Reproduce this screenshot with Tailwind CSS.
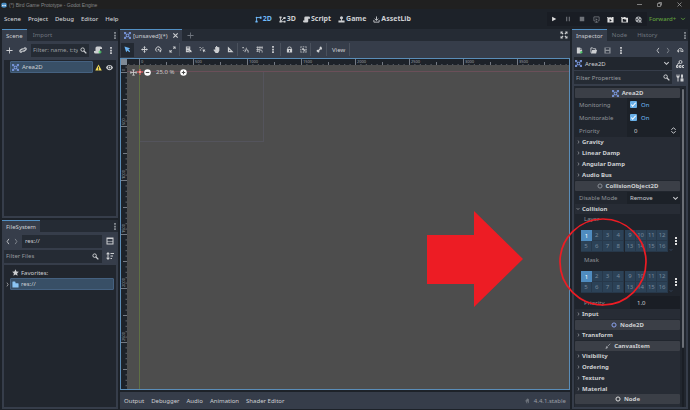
<!DOCTYPE html>
<html lang="en">
<head>
	<meta charset="UTF-8">
	<meta name="viewport" content="width=device-width, initial-scale=1.0">
	<title>(*) Bird Game Prototype - Godot Engine</title>
	<script src="https://cdn.jsdelivr.net/npm/@tailwindcss/browser@4"></script>
</head>
<body class="relative flex flex-col h-screen overflow-hidden bg-[#1d2229] text-[#cdcfd2] text-[6px] leading-[8px] font-['Noto_Sans',sans-serif]">

<!-- Icon sprite -->
<svg class="hidden" xmlns="http://www.w3.org/2000/svg">
	<symbol id="i-area" viewBox="0 0 16 16"><g fill="none" stroke="#7f9ee8" stroke-width="2"><rect x="5" y="5" width="6" height="6"/><path d="M1 5V1h4M11 1h4v4M15 11v4h-4M5 15H1v-4M1 1l4 4M15 1l-4 4M15 15l-4-4M1 15l4-4"/></g></symbol>
	<symbol id="i-dots" viewBox="0 0 4 16"><path fill="currentColor" d="M0 0h4v4H0zM0 6h4v4H0zM0 12h4v4H0z"/></symbol>
	<symbol id="i-plus" viewBox="0 0 16 16"><path fill="currentColor" d="M7 1h2v6h6v2H9v6H7V9H1V7h6z"/></symbol>
	<symbol id="i-link" viewBox="0 0 16 16"><g fill="none" stroke="currentColor" stroke-width="2.4"><path d="M7 9.5 5 12a2.2 2.2 0 0 1-3-3l3-2.500a2.200 2.200 0 0 1 3 0M9 6.500 11 4a2.200 2.200 0 0 1 3 3l-3 2.500a2.200 2.200 0 0 1-3 0"/></g></symbol>
	<symbol id="i-search" viewBox="0 0 16 16"><circle cx="6" cy="6" r="4" fill="none" stroke="currentColor" stroke-width="2.200"/><path d="m9 9 5.500 5.500" stroke="currentColor" stroke-width="3"/></symbol>
	<symbol id="i-script" viewBox="0 0 16 16"><path fill="currentColor" d="M6 1a3 3 0 0 0-3 3v6H0v2a3 3 0 0 0 3 3h6a3 3 0 0 0 3-3V6h4V4a3 3 0 0 0-3-3z"/></symbol>
	<symbol id="i-warn" viewBox="0 0 16 16"><path fill="#f5dc55" d="M8 1 0.500 15h15z"/><path fill="#21262e" d="M7 6h2v5H7zM7 12h2v2H7z"/></symbol>
	<symbol id="i-eye" viewBox="0 0 16 16"><path fill="currentColor" fill-rule="evenodd" d="M8 2C4 2 1 5 0 8c1 3 4 6 8 6s7-3 8-6c-1-3-4-6-8-6zm0 2a4 4 0 1 1 0 8 4 4 0 0 1 0-8z"/><circle cx="8" cy="8" r="2.200" fill="currentColor"/></symbol>
	<symbol id="i-left" viewBox="0 0 8 16"><path d="M6 2 2 8l4 6" fill="none" stroke="currentColor" stroke-width="2"/></symbol>
	<symbol id="i-right" viewBox="0 0 8 16"><path d="m2 2 4 6-4 6" fill="none" stroke="currentColor" stroke-width="2"/></symbol>
	<symbol id="i-down" viewBox="0 0 16 16"><path d="m3 5 5 5 5-5" fill="none" stroke="currentColor" stroke-width="2.400"/></symbol>
	<symbol id="i-split" viewBox="0 0 16 16"><path fill="currentColor" fill-rule="evenodd" d="M1 1h14v14H1zM3 4v4h10V4zM3 9v4h10V9z"/></symbol>
	<symbol id="i-sort" viewBox="0 0 16 16"><path fill="currentColor" d="M4 0 0 4.500h3v7H0L4 16l4-4.500H5v-7h3zM9 2h7v2H9zM9 7h5v2H9zM9 12h3v2H9z"/></symbol>
	<symbol id="i-star" viewBox="0 0 16 16"><path fill="currentColor" d="m8 0.500 2.300 5 5.400.6-4 3.700 1.100 5.400L8 12.500l-4.800 2.700 1.100-5.400-4-3.700 5.400-.6z"/></symbol>
	<symbol id="i-folder" viewBox="0 0 16 16"><path fill="#8bc4f3" d="M1 2a1 1 0 0 1 1-1h4a2 2 0 0 1 2 2v2h6a1 1 0 0 1 1 1v8a1 1 0 0 1-1 1H2a1 1 0 0 1-1-1z"/></symbol>
	<symbol id="i-2d" viewBox="0 0 16 16"><path fill="none" stroke="currentColor" stroke-width="2" d="M3.500 12V3.500H13"/><circle cx="3.500" cy="3.500" r="2" fill="currentColor"/><path fill="currentColor" d="M1 11h5v4H1zM11 1h4v5h-4z"/></symbol>
	<symbol id="i-3d" viewBox="0 0 16 16"><path fill="none" stroke="currentColor" stroke-width="2" d="M3.500 3v10H13M3.500 13 12 4"/><path fill="currentColor" d="M1 1h5v4H1zM10 2h5v5h-5zM11 11h4v4h-4zM1 11h5v4H1z"/></symbol>
	<symbol id="i-game" viewBox="0 0 16 16"><circle cx="8" cy="4" r="3.500" fill="currentColor"/><path fill="currentColor" d="M7 6h2v4h6v5H1v-5h6z"/></symbol>
	<symbol id="i-asset" viewBox="0 0 16 16"><path fill="none" stroke="currentColor" stroke-width="2" d="M8 1v9M4 6l4 4 4-4M2 9v5h12V9"/></symbol>
	<symbol id="i-play" viewBox="0 0 16 16"><path fill="currentColor" d="M3 2v12l11-6z"/></symbol>
	<symbol id="i-pause" viewBox="0 0 16 16"><path fill="currentColor" d="M3 2h3v12H3zM10 2h3v12h-3z"/></symbol>
	<symbol id="i-stop" viewBox="0 0 16 16"><path fill="currentColor" d="M2 2h12v12H2z"/></symbol>
	<symbol id="i-remote" viewBox="0 0 16 16"><path fill="none" stroke="currentColor" stroke-width="2" d="M5 11H2V2h12v9h-3M8 11v4M4 14h8"/><path fill="currentColor" d="M6 5v6l5-3z"/></symbol>
	<symbol id="i-clap" viewBox="0 0 16 16"><path fill="currentColor" fill-rule="evenodd" d="M0 2h3l1 2h2L5 2h3l1 2h2l-1-2h5v13H1V5zM6 7v6l5-3z"/></symbol>
	<symbol id="i-clapf" viewBox="0 0 16 16"><path fill="currentColor" fill-rule="evenodd" d="M0 2h3l1 2h2L5 2h5l1 2h5v11H1V5zM4 7v6h8V8H8L7 7z"/></symbol>
	<symbol id="i-movie" viewBox="0 0 16 16"><path fill="currentColor" fill-rule="evenodd" d="M8 1a7 7 0 1 0 0 14h8v-2h-3A7 7 0 0 0 8 1zm0 2a1.500 1.500 0 1 1 0 3 1.500 1.500 0 0 1 0-3zM4.500 6.500a1.500 1.500 0 1 1 0 3 1.500 1.500 0 0 1 0-3zm7 0a1.500 1.500 0 1 1 0 3 1.500 1.500 0 0 1 0-3zM8 10a1.500 1.500 0 1 1 0 3 1.500 1.500 0 0 1 0-3z"/></symbol>
	<symbol id="i-select" viewBox="0 0 16 16"><path fill="#6bb3f2" d="m1 1 4 13 3-4 4 4 2-2-4-4 4-3z"/></symbol>
	<symbol id="i-move" viewBox="0 0 16 16"><path fill="currentColor" d="M8 0 5 4h2v3H4V5L0 8l4 3V9h3v3H5l3 4 3-4H9V9h3v2l4-3-4-3v2H9V4h2z"/></symbol>
	<symbol id="i-rotate" viewBox="0 0 16 16"><path fill="none" stroke="currentColor" stroke-width="2.200" d="M4.500 13A6 6 0 1 1 12 12"/><circle cx="8" cy="8" r="2" fill="currentColor"/><path fill="currentColor" d="m9 10 6 0-3 5z"/></symbol>
	<symbol id="i-scale" viewBox="0 0 16 16"><path fill="currentColor" d="M9 1h6v6h-2V4.500L10.500 7 9 5.500 11.500 3H9zM1 9h2v2.500L5.500 9 7 10.500 4.500 13H7v2H1z"/></symbol>
	<symbol id="i-list" viewBox="0 0 16 16"><path fill="currentColor" fill-rule="evenodd" d="M2 1h10v8H9v5H2zM4 3v1h6V3zM4 6v1h6V6zM4 9v1h4V9z"/><path fill="currentColor" d="m9 9 1.500 7 1.500-2.500 3 1 .5-2-2-1.500L15 9z"/></symbol>
	<symbol id="i-pivot" viewBox="0 0 16 16"><path fill="currentColor" d="M1 2h3v2H1zM5 5h2v2H5zM2 8h3v2H2zM8 3h2v2H8zM8 8l2 7 1.500-3 3.500 1-2-4 2-1z"/></symbol>
	<symbol id="i-hand" viewBox="0 0 16 16"><path fill="currentColor" d="M7 0h2.500v2H12v1h2.500v8l-3 5H6L1 9l1.500-1.500L5 9V2h2z"/></symbol>
	<symbol id="i-ruler" viewBox="0 0 16 16"><path fill="currentColor" fill-rule="evenodd" d="M2 1v13h13zm3 7 3.500 3.500H5z"/></symbol>
	<symbol id="i-snap" viewBox="0 0 16 16"><path fill="currentColor" d="M1 2h3v3H1zM6 6h2v2H6zM2 9h2v2H2zM9 4h2v2H9z"/><path fill="none" stroke="currentColor" stroke-width="2.200" d="M7 14v-2a3.500 3.500 0 0 1 7 0v3"/></symbol>
	<symbol id="i-grid" viewBox="0 0 16 16"><path fill="none" stroke="currentColor" stroke-width="1.800" d="M4 1v12M9 1v7M14 1v6M1 3h14M1 8h8M1 12h5M8 15v-3a2.500 2.500 0 0 1 6 0v3"/></symbol>
	<symbol id="i-lock" viewBox="0 0 16 16"><path fill="currentColor" fill-rule="evenodd" d="M8 1a5 5 0 0 0-5 5v1H2v8h12V7h-1V6a5 5 0 0 0-5-5zm0 2a3 3 0 0 1 3 3v1H5V6a3 3 0 0 1 3-3zM7 9h2v4H7z"/></symbol>
	<symbol id="i-group" viewBox="0 0 16 16"><path fill="currentColor" d="M1 1h3v2H3v1H1zM6 1h4v2H6zM12 1h3v3h-2V3h-1zM1 12h2v1h1v2H1zM13 12h2v3h-3v-2h1zM6 13h4v2H6zM1 6h2v4H1zM13 6h2v4h-2zM5 5h4v4H5zM10 7h2v5H7v-2h3z"/></symbol>
	<symbol id="i-bone" viewBox="0 0 16 16"><path fill="currentColor" d="M11 1a2.500 2.500 0 0 0-2.500 3.500L8 6 5 9l-1.500-.5a2.500 2.500 0 0 0-.5 4.800 2.500 2.500 0 0 0 4.800-1L7.500 11 10 8l1.500.3A2.500 2.500 0 0 0 13 4a2.500 2.500 0 0 0-2-3z"/></symbol>
	<symbol id="i-expand" viewBox="0 0 16 16"><path fill="currentColor" d="M1 1h5L4.500 2.500 7 5 5 7 2.500 4.500 1 6zM15 1v5l-1.500-1.500L11 7 9 5l2.500-2.500L10 1zM15 15h-5l1.500-1.500L9 11l2-2 2.500 2.500L15 10zM1 15v-5l1.500 1.500L5 9l2 2-2.500 2.500L6 15z"/></symbol>
	<symbol id="i-close" viewBox="0 0 16 16"><path d="m3 3 10 10M13 3 3 13" stroke="currentColor" stroke-width="2.600"/></symbol>
	<symbol id="i-newres" viewBox="0 0 16 16"><path fill="currentColor" d="M2 1h7v5h5v4h-3v5H2zM10 1l4 4h-4z"/><path fill="#4fd46c" d="M11 9h2v2h2v2h-2v2h-2v-2H9v-2h2z"/></symbol>
	<symbol id="i-load" viewBox="0 0 16 16"><path fill="none" stroke="currentColor" stroke-width="2" d="M2 13V2h4l2 2h5v3"/><path fill="currentColor" d="M5 7h11l-2 8H2z"/></symbol>
	<symbol id="i-save" viewBox="0 0 16 16"><path fill="currentColor" fill-rule="evenodd" d="M1 1h14v14H1zM4 2v4h8V2zM4 9v4h8V9z"/></symbol>
	<symbol id="i-history" viewBox="0 0 16 16"><path fill="none" stroke="currentColor" stroke-width="2.200" d="M3 11a5.500 5.500 0 1 1 10 0"/><path fill="currentColor" d="M0 8h6l-3 5zM8 5h2v4h4v2H8z"/></symbol>
	<symbol id="i-doc" viewBox="0 0 16 16"><circle cx="9" cy="4" r="3" fill="none" stroke="currentColor" stroke-width="2"/><path fill="none" stroke="currentColor" stroke-width="2" d="M7 6 2 9M1 11v4h3v-4zM7 11v4h3v-4zM16 11h-3v4h3"/></symbol>
	<symbol id="i-tools" viewBox="0 0 16 16"><path fill="currentColor" d="M1 1h2v3h2V1h2v5L5 8v7H3V8L1 6zM10 1h4v6h-1v2h2v6H9V9h2V7h-1z"/></symbol>
	<symbol id="i-ring" viewBox="0 0 16 16"><circle cx="8" cy="8" r="5.500" fill="none" stroke="currentColor" stroke-width="2.600"/></symbol>
	<symbol id="i-brush" viewBox="0 0 16 16"><path d="M14 2 7 9" stroke="currentColor" stroke-width="2"/><path fill="currentColor" d="M5 8l3 3c-1 3-4 4-7 4 2-2 1-6 4-7z"/></symbol>
	<symbol id="i-spin" viewBox="0 0 16 16"><path fill="none" stroke="currentColor" stroke-width="2.200" d="m3 6 5-4 5 4M3 10l5 4 5-4"/></symbol>
	<symbol id="i-godot" viewBox="0 0 16 16"><path fill="currentColor" d="M10 1a5 5 0 0 0-4 5L2 8l4 1v3l2 3V9h2v6l3-3V3z"/></symbol>
</svg>

<!-- Title bar -->
<header class="flex items-center h-[9px] shrink-0 bg-[#202020] pl-px text-[#85878a] text-[5px] font-['Liberation_Sans',sans-serif]">
	<svg class="size-[6px] mr-[2px]" viewBox="0 0 16 16"><path fill="#4a90c8" d="M1 5l2-3 3 1 1-2h2l1 2 3-1 2 3v7c0 2-3 3-7 3s-7-1-7-3z"/><circle cx="5" cy="9" r="2" fill="#fff"/><circle cx="11" cy="9" r="2" fill="#fff"/></svg>
	<span class="grow">(*) Bird Game Prototype - Godot Engine</span>
	<div class="flex items-center gap-[15px] pr-[8px]">
		<button type="button" aria-label="Minimize"><svg class="size-[5px]" viewBox="0 0 10 10"><path d="M0 5h10" stroke="#a0a0a0" stroke-width="1.500"/></svg></button>
		<button type="button" aria-label="Restore"><svg class="size-[5px]" viewBox="0 0 10 10"><path d="M1 3h6v6H1zM3 1h6v6" fill="none" stroke="#a0a0a0" stroke-width="1.500"/></svg></button>
		<button type="button" aria-label="Close"><svg class="size-[5px]" viewBox="0 0 10 10"><path d="m1 1 8 8M9 1 1 9" stroke="#a0a0a0" stroke-width="1.500"/></svg></button>
	</div>
</header>

<!-- Menu bar -->
<nav class="flex items-center h-[20px] shrink-0 pl-[4px] pr-[8px] font-medium">
	<div class="flex gap-[7px]">
		<button type="button">Scene</button>
		<button type="button">Project</button>
		<button type="button">Debug</button>
		<button type="button">Editor</button>
		<button type="button">Help</button>
	</div>
	<div class="flex grow justify-center gap-[7px] font-bold text-[7px]">
		<button type="button" class="flex items-center gap-px text-[#70bafa]"><svg class="size-[7px]"><use href="#i-2d"/></svg>2D</button>
		<button type="button" class="flex items-center gap-px"><svg class="size-[7px]"><use href="#i-3d"/></svg>3D</button>
		<button type="button" class="flex items-center gap-px"><svg class="size-[7px]"><use href="#i-script"/></svg>Script</button>
		<button type="button" class="flex items-center gap-px"><svg class="size-[7px]"><use href="#i-game"/></svg>Game</button>
		<button type="button" class="flex items-center gap-px"><svg class="size-[7px]"><use href="#i-asset"/></svg>AssetLib</button>
	</div>
	<div class="flex items-center h-[14px] pr-[2px] bg-[#191d24] text-[#e0e0e0]">
		<button type="button" aria-label="Run" class="w-[14px] flex justify-center"><svg class="size-[6px]"><use href="#i-play"/></svg></button>
		<button type="button" aria-label="Pause" class="w-[14px] flex justify-center text-[#6e7278]"><svg class="size-[6px]"><use href="#i-pause"/></svg></button>
		<button type="button" aria-label="Stop" class="w-[14px] flex justify-center text-[#6e7278]"><svg class="size-[6px]"><use href="#i-stop"/></svg></button>
		<button type="button" aria-label="Remote deploy" class="w-[14px] flex justify-center text-[#6e7278]"><svg class="size-[7px]"><use href="#i-remote"/></svg></button>
		<button type="button" aria-label="Run scene" class="w-[14px] flex justify-center"><svg class="size-[7px]"><use href="#i-clap"/></svg></button>
		<button type="button" aria-label="Run specific scene" class="w-[14px] flex justify-center"><svg class="size-[7px]"><use href="#i-clapf"/></svg></button>
		<button type="button" aria-label="Movie maker" class="w-[14px] flex justify-center text-[#b0b3b7]"><svg class="size-[7px]"><use href="#i-movie"/></svg></button>
	</div>
	<label class="flex items-center pl-[2px] text-[#5f9f3c]">
		<select aria-label="Renderer" class="appearance-none outline-none w-[31px]"><option>Forward+</option></select>
		<svg class="size-[6px] -mr-[4px]"><use href="#i-down"/></svg>
	</label>
</nav>

<main class="flex grow min-h-0 gap-[2px] px-[2px] pb-px">

	<!-- Left docks -->
	<aside class="flex flex-col w-[116px] shrink-0 gap-[2px]">
		<section class="flex flex-col h-[189px]">
			<div class="flex items-stretch h-[12px] bg-[#252b34]">
				<button type="button" class="px-[4px] bg-[#363d4a] border-t border-[#5290c4]">Scene</button>
				<button type="button" class="px-[6px] text-[#6f757e]">Import</button>
				<button type="button" aria-label="Dock options" class="ml-auto pr-[2px] text-[#8b9097]"><svg class="w-[2px] h-[7px]"><use href="#i-dots"/></svg></button>
			</div>
			<div class="flex flex-col grow bg-[#363d4a] p-[2px]">
				<div class="flex items-center h-[14px] pl-[2px] gap-[6px]">
					<button type="button" aria-label="Add node"><svg class="size-[7px]"><use href="#i-plus"/></svg></button>
					<button type="button" aria-label="Instance scene"><svg class="size-[8px]"><use href="#i-link"/></svg></button>
					<label class="flex items-center grow h-[13px] -ml-[2px] bg-[#252b34] px-[2px]">
						<input type="text" aria-label="Filter nodes" placeholder="Filter: name, t:type" class="grow w-0 outline-none placeholder:text-[#969a9f]">
						<svg class="size-[7px] ml-[2px]"><use href="#i-search"/></svg>
					</label>
					<button type="button" aria-label="Attach script" class="-ml-px"><svg class="size-[8px]" viewBox="0 0 16 16"><use href="#i-script"/><path fill="#4fd46c" d="M11 9h2v2h2v2h-2v2h-2v-2H9v-2h2z"/></svg></button>
					<button type="button" aria-label="More" class="pl-[2px] pr-[4px]"><svg class="w-[2px] h-[7px]"><use href="#i-dots"/></svg></button>
				</div>
				<div class="grow mt-[3px] bg-[#21262e] p-px">
					<div class="flex items-center h-[12px] pl-[5px] pr-[2px] gap-[4px]">
						<span class="flex items-center grow h-[12px] pl-px gap-[3px] bg-[#384f66] border border-[#456180] rounded-[1px]"><svg class="size-[7px]"><use href="#i-area"/></svg>Area2D</span>
						<svg class="size-[7px] -ml-[2px]"><use href="#i-warn"/></svg>
						<svg class="size-[7px]"><use href="#i-eye"/></svg>
					</div>
				</div>
			</div>
		</section>

		<section class="flex flex-col grow">
			<div class="flex items-stretch h-[12px] bg-[#252b34]">
				<button type="button" class="px-[4px] bg-[#363d4a] border-t border-[#5290c4]">FileSystem</button>
				<button type="button" aria-label="Dock options" class="ml-auto pr-[2px] text-[#8b9097]"><svg class="w-[2px] h-[7px]"><use href="#i-dots"/></svg></button>
			</div>
			<div class="flex flex-col grow bg-[#363d4a] p-[2px]">
				<div class="flex items-center h-[14px] pl-[2px]">
					<button type="button" aria-label="Back"><svg class="w-[4px] h-[7px]"><use href="#i-left"/></svg></button>
					<button type="button" aria-label="Forward" class="ml-[4px] text-[#868b92]"><svg class="w-[4px] h-[7px]"><use href="#i-right"/></svg></button>
					<input type="text" aria-label="Path" value="res://" class="grow w-0 h-[13px] ml-[4px] bg-[#252b34] px-[3px] outline-none">
					<button type="button" aria-label="Split mode" class="pl-[4px] pr-[2px]"><svg class="size-[8px]"><use href="#i-split"/></svg></button>
				</div>
				<div class="flex items-center h-[14px] mt-px">
					<label class="flex items-center grow h-[13px] bg-[#252b34] px-[2px]">
						<input type="text" aria-label="Filter files" placeholder="Filter Files" class="grow w-0 outline-none placeholder:text-[#969a9f]">
						<svg class="size-[7px] mr-px"><use href="#i-search"/></svg>
					</label>
					<button type="button" aria-label="Sort" class="pl-[4px] pr-[2px]"><svg class="size-[8px]"><use href="#i-sort"/></svg></button>
				</div>
				<div class="grow mt-[2px] bg-[#21262e] px-[2px] pt-[2px]">
					<div class="flex items-center h-[11px] pl-[6px] gap-[2px]"><svg class="size-[7px]"><use href="#i-star"/></svg>Favorites:</div>
					<div class="flex items-center h-[12px]">
						<svg class="w-[3px] h-[5px] mr-px"><use href="#i-right"/></svg>
						<span class="flex items-center grow h-[12px] pl-px gap-[2px] bg-[#384f66] border border-[#456180] rounded-[1px]"><svg class="size-[7px]"><use href="#i-folder"/></svg>res://</span>
					</div>
				</div>
			</div>
		</section>
	</aside>

	<!-- Center -->
	<div class="flex flex-col grow min-w-0">
		<div class="flex items-stretch h-[12px] shrink-0 bg-[#252b34]">
			<button type="button" class="flex items-center gap-[2px] pl-[4px] pr-[3px] bg-[#363d4a] border-t border-[#5290c4]"><svg class="size-[7px]"><use href="#i-area"/></svg>[unsaved](*)<svg class="size-[7px] ml-[2px]"><use href="#i-close"/></svg></button>
			<button type="button" aria-label="New scene" class="px-[5px] text-[#6f757e]"><svg class="size-[7px]"><use href="#i-plus"/></svg></button>
			<button type="button" aria-label="Distraction free" class="ml-auto pr-[2px]"><svg class="size-[8px]"><use href="#i-expand"/></svg></button>
		</div>

		<!-- Canvas toolbar -->
		<div class="flex items-center h-[17px] shrink-0 bg-[#363d4a] pl-px">
			<button type="button" aria-label="Select" class="flex items-center justify-center w-[13px] h-[14px] mr-[3px] bg-[#232932]"><svg class="size-[7px]"><use href="#i-select"/></svg></button>
			<button type="button" aria-label="Move" class="flex justify-center w-[14px]"><svg class="size-[7px]"><use href="#i-move"/></svg></button>
			<button type="button" aria-label="Rotate" class="flex justify-center w-[14px]"><svg class="size-[7px]"><use href="#i-rotate"/></svg></button>
			<button type="button" aria-label="Scale" class="flex justify-center w-[14px]"><svg class="size-[7px]"><use href="#i-scale"/></svg></button>
			<span class="w-px h-[13px] mr-px bg-[#4a515d]"></span>
			<button type="button" aria-label="List selectable" class="flex justify-center w-[14px]"><svg class="size-[7px]"><use href="#i-list"/></svg></button>
			<button type="button" aria-label="Pivot" class="flex justify-center w-[14px]"><svg class="size-[7px]"><use href="#i-pivot"/></svg></button>
			<button type="button" aria-label="Pan" class="flex justify-center w-[14px]"><svg class="size-[7px]"><use href="#i-hand"/></svg></button>
			<button type="button" aria-label="Ruler" class="flex justify-center w-[14px]"><svg class="size-[7px]"><use href="#i-ruler"/></svg></button>
			<span class="w-px h-[13px] bg-[#4a515d]"></span>
			<button type="button" aria-label="Smart snap" class="flex justify-center w-[14px]"><svg class="size-[7px]"><use href="#i-snap"/></svg></button>
			<button type="button" aria-label="Grid snap" class="flex justify-center w-[14px]"><svg class="size-[7px]"><use href="#i-grid"/></svg></button>
			<button type="button" aria-label="Snap options" class="flex justify-center w-[14px]"><svg class="w-[2px] h-[7px]"><use href="#i-dots"/></svg></button>
			<span class="w-px h-[13px] mr-px bg-[#4a515d]"></span>
			<button type="button" aria-label="Lock" class="flex justify-center w-[14px]"><svg class="size-[7px]"><use href="#i-lock"/></svg></button>
			<button type="button" aria-label="Group" class="flex justify-center w-[14px]"><svg class="size-[7px]"><use href="#i-group"/></svg></button>
			<span class="w-px h-[13px] mr-px bg-[#4a515d]"></span>
			<button type="button" aria-label="Skeleton" class="flex justify-center w-[14px]"><svg class="size-[7px]"><use href="#i-bone"/></svg></button>
			<span class="w-px h-[13px] mr-px bg-[#4a515d]"></span>
			<button type="button" class="px-[4px]">View</button>
			<span class="w-px h-[13px] bg-[#4a515d]"></span>
		</div>

		<!-- 2D viewport -->
		<div class="relative grow min-h-0 bg-[#4d4d4d] border border-[#5a8db8]">
			<svg class="absolute inset-0 w-full h-full">
				<defs>
					<pattern id="ticks-x" x="18" y="0" width="54" height="7" patternUnits="userSpaceOnUse">
						<path d="M.5 0v7M27.500 3v4" stroke="#737983"/>
						<path d="M5.900 5v1.500M11.300 5v1.500M16.700 5v1.500M22.100 5v1.500M32.900 5v1.500M38.300 5v1.500M43.700 5v1.500M49.100 5v1.500" stroke="#5d636d"/>
					</pattern>
					<pattern id="ticks-y" x="0" y="13" width="6" height="54" patternUnits="userSpaceOnUse">
						<path d="M0 .5h6M2 27.500h4" stroke="#737983"/>
						<path d="M4.500 5.900h1.500M4.500 11.300h1.500M4.500 16.700h1.500M4.500 22.100h1.500M4.500 32.900h1.500M4.500 38.300h1.500M4.500 43.700h1.500M4.500 49.100h1.500" stroke="#5d636d"/>
					</pattern>
				</defs>
				<!-- axes and viewport bounds -->
				<path d="M6 12.500h1000" stroke="#6a4f59"/>
				<path d="M18.500 6v1000" stroke="#5f7045"/>
				<path d="M19 82.500h123.500M142.500 13v70" fill="none" stroke="#54545c"/>
				<!-- rulers -->
				<path d="M0 0h1000v6H0zM0 0h6v1000H0z" fill="#1d2229"/>
				<rect x="6" width="100%" height="6" fill="url(#ticks-x)"/>
				<rect y="6" width="6" height="100%" fill="url(#ticks-y)"/>
				<rect width="6" height="6" fill="#7f8a96"/>
				<g fill="#9da1a7" font-size="4">
					<text x="20" y="4">0</text><text x="74" y="4">500</text><text x="128" y="4">1000</text><text x="182" y="4">1500</text><text x="236" y="4">2000</text><text x="290" y="4">2500</text><text x="344" y="4">3000</text><text x="398" y="4">3500</text>
					<text transform="translate(4 12) rotate(-90)">0</text><text transform="translate(4 66) rotate(-90)">500</text><text transform="translate(4 120) rotate(-90)">1000</text><text transform="translate(4 174) rotate(-90)">1500</text><text transform="translate(4 228) rotate(-90)">2000</text><text transform="translate(4 282) rotate(-90)">2500</text>
				</g>
			</svg>
			<!-- zoom controls -->
			<div class="absolute left-[9px] top-[9px] flex items-center text-[#c9c9c9]">
				<button type="button" aria-label="Center view"><svg class="size-[7px]" viewBox="0 0 16 16"><path fill="none" stroke="currentColor" stroke-width="2" d="M8 2v12M1 8h14M5 2h6M5 14h6M2 5v6M14 5v6"/></svg></button>
				<svg class="size-[6px]" viewBox="0 0 12 12"><path d="M6 0v12M0 6h12" stroke="#ff5f5f" stroke-width="2"/><circle cx="6" cy="6" r="1.500" fill="#fff"/></svg>
				<button type="button" aria-label="Zoom out" class="ml-px"><svg class="size-[7px]" viewBox="0 0 16 16"><circle cx="8" cy="8" r="7.500" fill="#fff"/><path d="M4 8h8" stroke="#4d4d4d" stroke-width="2.500"/></svg></button>
				<span class="px-[5px] w-[29px]">25.0 %</span>
				<button type="button" aria-label="Zoom in"><svg class="size-[7px]" viewBox="0 0 16 16"><circle cx="8" cy="8" r="7.500" fill="#fff"/><path d="M8 4v8M4 8h8" stroke="#4d4d4d" stroke-width="2.500"/></svg></button>
			</div>
		</div>

		<!-- Bottom panel -->
		<div class="flex items-center h-[17px] shrink-0 mt-[2px] bg-[#363d4a] px-[4px] gap-[7px]">
			<button type="button">Output</button>
			<button type="button">Debugger</button>
			<button type="button">Audio</button>
			<button type="button">Animation</button>
			<button type="button">Shader Editor</button>
			<span class="flex items-center gap-[4px] ml-auto text-[#9a9ea5]"><svg class="size-[6px] text-[#6f757e]"><use href="#i-godot"/></svg>4.4.1.stable</span>
		</div>
	</div>

	<!-- Inspector dock -->
	<aside class="flex flex-col w-[116px] shrink-0">
		<div class="flex items-stretch h-[12px] shrink-0 bg-[#252b34] text-[#6f757e]">
			<button type="button" class="px-[4px] bg-[#363d4a] border-t border-[#5290c4] text-[#cdcfd2]">Inspector</button>
			<button type="button" class="px-[5px]">Node</button>
			<button type="button" class="px-[5px]">History</button>
			<button type="button" aria-label="Dock options" class="ml-auto pr-[2px] text-[#8b9097]"><svg class="w-[2px] h-[7px]"><use href="#i-dots"/></svg></button>
		</div>
		<div class="flex flex-col grow min-h-0 bg-[#363d4a] p-[2px]">
			<div class="flex items-center h-[14px] shrink-0 pl-[2px] gap-[7px]">
				<button type="button" aria-label="New resource"><svg class="size-[7px]"><use href="#i-newres"/></svg></button>
				<button type="button" aria-label="Load resource"><svg class="size-[7px]"><use href="#i-load"/></svg></button>
				<button type="button" aria-label="Save resource" class="text-[#8b9097]"><svg class="size-[7px]"><use href="#i-save"/></svg></button>
				<button type="button" aria-label="Resource options" class="px-[2px]"><svg class="w-[2px] h-[7px]"><use href="#i-dots"/></svg></button>
				<button type="button" aria-label="Previous" class="ml-auto"><svg class="w-[4px] h-[7px]"><use href="#i-left"/></svg></button>
				<button type="button" aria-label="Next" class="-ml-px text-[#868b92]"><svg class="w-[4px] h-[7px]"><use href="#i-right"/></svg></button>
				<button type="button" aria-label="History" class="pr-[2px]"><svg class="size-[7px]"><use href="#i-history"/></svg></button>
			</div>
			<div class="flex items-center shrink-0 h-[13px]">
				<button type="button" class="flex items-center grow h-[13px] gap-[3px] px-px pr-[2px] bg-[#21262e] text-left"><svg class="size-[7px]"><use href="#i-area"/></svg><span class="grow">Area2D</span><svg class="size-[7px]"><use href="#i-down"/></svg></button>
				<button type="button" aria-label="Open documentation" class="pl-[4px] pr-[2px]"><svg class="size-[8px]"><use href="#i-doc"/></svg></button>
			</div>
			<div class="flex items-center shrink-0 h-[13px] mt-px">
				<label class="flex items-center grow h-[13px] bg-[#252b34] px-[2px]">
					<input type="text" aria-label="Filter properties" placeholder="Filter Properties" class="grow w-0 outline-none placeholder:text-[#969a9f]">
					<svg class="size-[7px]"><use href="#i-search"/></svg>
				</label>
				<button type="button" aria-label="Property settings" class="pl-[4px] pr-[2px]"><svg class="size-[8px]"><use href="#i-tools"/></svg></button>
			</div>

			<!-- Property list -->
			<div class="flex grow min-h-0 mt-[2px] bg-[#21262e] pl-px pr-[2px] pt-[2px] gap-[2px] overflow-hidden">
				<div class="grow min-w-0">
					<h3 class="flex items-center justify-center gap-[3px] h-[10px] bg-[#3b3f47] font-bold rounded-[1px]"><svg class="size-[7px]"><use href="#i-area"/></svg>Area2D</h3>
					<div class="text-[#8f9399]">
						<div class="flex items-center h-[13px] pl-[4px]">
							<label for="monitoring" class="w-[48px]">Monitoring</label>
							<span class="flex items-center grow h-full bg-[#1c2128] pl-[3px] gap-[4px] text-[#70bafa]">
								<span class="grid"><input type="checkbox" id="monitoring" checked class="appearance-none col-start-1 row-start-1 size-[7px] rounded-[1px] bg-[#69b0e8]"><svg class="col-start-1 row-start-1 size-[7px] pointer-events-none" viewBox="0 0 16 16"><path d="m3 8 3 4 7-8" fill="none" stroke="#fff" stroke-width="2.500"/></svg></span>On
							</span>
						</div>
						<div class="flex items-center h-[13px] pl-[4px]">
							<label for="monitorable" class="w-[48px]">Monitorable</label>
							<span class="flex items-center grow h-full bg-[#1c2128] pl-[3px] gap-[4px] text-[#70bafa]">
								<span class="grid"><input type="checkbox" id="monitorable" checked class="appearance-none col-start-1 row-start-1 size-[7px] rounded-[1px] bg-[#69b0e8]"><svg class="col-start-1 row-start-1 size-[7px] pointer-events-none" viewBox="0 0 16 16"><path d="m3 8 3 4 7-8" fill="none" stroke="#fff" stroke-width="2.500"/></svg></span>On
							</span>
						</div>
						<div class="flex items-center h-[13px] pl-[4px]">
							<label for="priority" class="w-[48px]">Priority</label>
							<span class="flex items-center grow h-full bg-[#1c2128] pl-[7px] pr-[3px] text-[#cdcfd2]">
								<input type="text" id="priority" value="0" class="grow w-0 outline-none"><svg class="size-[7px]"><use href="#i-spin"/></svg>
							</span>
						</div>
					</div>
					<div class="grid auto-rows-fr h-[43px] font-bold">
						<button type="button" class="flex items-center gap-[2px] pl-[2px] bg-[#272c35]"><svg class="w-[3px] h-[4px]"><use href="#i-right"/></svg>Gravity</button>
						<button type="button" class="flex items-center gap-[2px] pl-[2px] bg-[#272c35]"><svg class="w-[3px] h-[4px]"><use href="#i-right"/></svg>Linear Damp</button>
						<button type="button" class="flex items-center gap-[2px] pl-[2px] bg-[#272c35]"><svg class="w-[3px] h-[4px]"><use href="#i-right"/></svg>Angular Damp</button>
						<button type="button" class="flex items-center gap-[2px] pl-[2px] bg-[#272c35]"><svg class="w-[3px] h-[4px]"><use href="#i-right"/></svg>Audio Bus</button>
					</div>

					<h3 class="flex items-center justify-center gap-[3px] h-[10px] my-px bg-[#3b3f47] font-bold rounded-[1px]"><svg class="size-[6px] text-[#8b9097]"><use href="#i-ring"/></svg>CollisionObject2D</h3>
					<div class="flex items-center h-[12px] pl-[4px] text-[#8f9399]">
						<label for="disable-mode" class="w-[48px]">Disable Mode</label>
						<span class="flex items-center grow h-full bg-[#1c2128] pl-[3px] pr-px text-[#cdcfd2]">
							<select id="disable-mode" class="appearance-none outline-none grow"><option>Remove</option></select><svg class="size-[7px]"><use href="#i-down"/></svg>
						</span>
					</div>
					<button type="button" class="flex items-center gap-[2px] pl-px w-full h-[10px] bg-[#272c35] font-bold"><svg class="size-[4px]"><use href="#i-down"/></svg>Collision</button>
					<div class="pl-[6px] bg-[#1f242c] text-[#8f9399]">
						<div class="h-[16px] pl-[3px] pt-px">Layer</div>
						<div class="flex items-end">
							<div data-layers class="flex gap-px text-[#76899b]"></div>
							<svg class="size-[4px] ml-px text-[#456180]"><use href="#i-down"/></svg>
							<button type="button" aria-label="Layer options" class="self-center ml-[2px] text-[#e0e0e0]"><svg class="w-[2px] h-[8px]"><use href="#i-dots"/></svg></button>
						</div>
						<div class="h-[19px] pl-[3px] pt-[4px]">Mask</div>
						<div class="flex items-end">
							<div data-layers class="flex gap-px text-[#76899b]"></div>
							<svg class="size-[4px] ml-px text-[#456180]"><use href="#i-down"/></svg>
							<button type="button" aria-label="Mask options" class="self-center ml-[2px] text-[#e0e0e0]"><svg class="w-[2px] h-[8px]"><use href="#i-dots"/></svg></button>
						</div>
						<div class="flex items-center h-[13px] mt-[3px] pl-[3px]">
							<label for="collision-priority" class="w-[46px]">Priority</label>
							<input type="text" id="collision-priority" value="1.0" class="grow w-0 h-full bg-[#1a1e25] pl-[7px] outline-none text-[#cdcfd2]">
						</div>
					</div>
					<button type="button" class="flex items-center gap-[2px] pl-[2px] w-full h-[10px] bg-[#272c35] font-bold"><svg class="w-[3px] h-[4px]"><use href="#i-right"/></svg>Input</button>

					<h3 class="flex items-center justify-center gap-[3px] h-[10px] mt-px bg-[#3b3f47] font-bold rounded-[1px]"><svg class="size-[6px] text-[#8da5f3]"><use href="#i-ring"/></svg>Node2D</h3>
					<button type="button" class="flex items-center gap-[2px] pl-[2px] w-full h-[10px] bg-[#272c35] font-bold"><svg class="w-[3px] h-[4px]"><use href="#i-right"/></svg>Transform</button>

					<h3 class="flex items-center justify-center gap-[3px] h-[10px] mt-px bg-[#3b3f47] font-bold rounded-[1px]"><svg class="size-[6px] text-[#9da1a7]"><use href="#i-brush"/></svg>CanvasItem</h3>
					<div class="grid auto-rows-fr h-[43px] font-bold">
						<button type="button" class="flex items-center gap-[2px] pl-[2px] bg-[#272c35]"><svg class="w-[3px] h-[4px]"><use href="#i-right"/></svg>Visibility</button>
						<button type="button" class="flex items-center gap-[2px] pl-[2px] bg-[#272c35]"><svg class="w-[3px] h-[4px]"><use href="#i-right"/></svg>Ordering</button>
						<button type="button" class="flex items-center gap-[2px] pl-[2px] bg-[#272c35]"><svg class="w-[3px] h-[4px]"><use href="#i-right"/></svg>Texture</button>
						<button type="button" class="flex items-center gap-[2px] pl-[2px] bg-[#272c35]"><svg class="w-[3px] h-[4px]"><use href="#i-right"/></svg>Material</button>
					</div>

					<h3 class="flex items-center justify-center gap-[3px] h-[10px] bg-[#3b3f47] font-bold rounded-[1px]"><svg class="size-[6px] text-[#e0e0e0]"><use href="#i-ring"/></svg>Node</h3>
					<button type="button" class="flex items-center gap-[2px] pl-[2px] w-full h-[10px] bg-[#272c35] font-bold"><svg class="w-[3px] h-[4px]"><use href="#i-right"/></svg>Process</button>
				</div>
				<div class="w-[2px] shrink-0 bg-[#1a1e25]"><div class="h-[259px] mt-px rounded-full bg-[#6b6f76]"></div></div>
			</div>
		</div>
	</aside>
</main>

<!-- Annotations -->
<svg class="absolute right-[167px] top-[211px] w-[96px] h-[96px] pointer-events-none" viewBox="0 0 96 96"><path fill="#ed1c24" d="M0 24h47V0l49 48-49 48V73H0z"/></svg>
<svg class="absolute right-[43px] top-[218px] size-[88px] pointer-events-none" viewBox="0 0 88 88"><circle cx="44" cy="44" r="43" fill="none" stroke="#ed1c24" stroke-width="1.700"/></svg>

<script>
	// Both layer grids hold two blocks of 4x2 toggles
	const blocks = [[1, 2, 3, 4, 5, 6, 7, 8], [9, 10, 11, 12, 13, 14, 15, 16]];

	document.querySelectorAll("[data-layers]").forEach(grid => {
		blocks.forEach(layers => {
			const block = document.createElement("div");
			block.className = "grid grid-cols-4 w-[43px]";
			layers.forEach(n => {
				const btn = document.createElement("button");
				btn.type = "button";
				btn.textContent = n;
				btn.className = n === 1
					? "h-[11px] bg-[#4f8cc0] text-white text-center"
					: "h-[11px] bg-[#2c4257] border-r border-b border-[#27384a] text-center";
				block.append(btn);
			});
			grid.append(block);
		});
	});
</script>
</body>
</html>
